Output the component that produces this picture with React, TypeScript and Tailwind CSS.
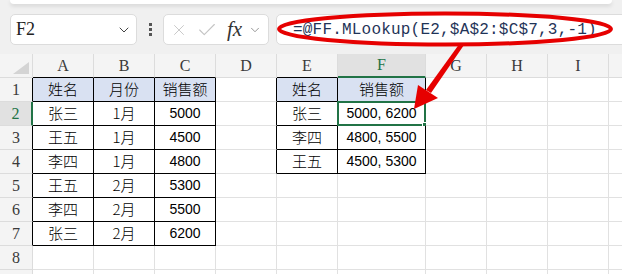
import { X, Check, ChevronDown } from "lucide-react";

const COLS = [
  { label: "", w: "w-[33px]" },
  { label: "A", w: "w-[61px]" },
  { label: "B", w: "w-[61px]" },
  { label: "C", w: "w-[61px]" },
  { label: "D", w: "w-[61px]" },
  { label: "E", w: "w-[61px]" },
  { label: "F", w: "w-[88px]" },
  { label: "G", w: "w-[61px]" },
  { label: "H", w: "w-[61px]" },
  { label: "I", w: "w-[61px]" },
  { label: "", w: "w-[61px]" },
];

// data rows, index = column (1..6)
const DATA: string[][] = [
  ["", "姓名", "月份", "销售额", "", "姓名", "销售额"],
  ["", "张三", "1月", "5000", "", "张三", "5000, 6200"],
  ["", "王五", "1月", "4500", "", "李四", "4800, 5500"],
  ["", "李四", "1月", "4800", "", "王五", "4500, 5300"],
  ["", "王五", "2月", "5300", "", "", ""],
  ["", "李四", "2月", "5500", "", "", ""],
  ["", "张三", "2月", "6200", "", "", ""],
  ["", "", "", "", "", "", ""],
  ["", "", "", "", "", "", ""],
];

function inTable(r: number, c: number) {
  if (r >= 1 && r <= 7 && c >= 1 && c <= 3) return true;
  if (r >= 1 && r <= 4 && (c === 5 || c === 6)) return true;
  return false;
}

const cjk = "font-['Noto_Sans_CJK_SC',sans-serif] font-light";
const num = "font-['Liberation_Sans',sans-serif]";
const serif = "font-['Liberation_Serif',serif]";

function Cell({ r, c }: { r: number; c: number }) {
  const text = DATA[r - 1]?.[c] ?? "";
  const right = inTable(r, c) || inTable(r, c + 1) ? "border-r-black" : "border-r-[#e1e1e1]";
  const bottom = inTable(r, c) || inTable(r + 1, c) ? "border-b-black" : "border-b-[#e1e1e1]";
  const header = r === 1 && inTable(r, c) ? "bg-[#d9e1f2]" : "bg-white";
  const isNum = /^[0-9, ]+$/.test(text);
  return (
    <div
      className={`${COLS[c].w} relative h-[24px] shrink-0 border-r border-b ${right} ${bottom} ${header} flex items-center justify-center ${
        isNum ? `${num} text-[14px]` : `${cjk} text-[15px]`
      } text-black`}
    >
      {text}
      {r === 2 && c === 6 && (
        <div className="absolute -left-[1px] -top-[1px] w-[89px] h-[25px] border-2 border-[#217346]">
          <div className="absolute -right-[4px] -bottom-[4px] w-[6px] h-[6px] bg-[#217346] border border-white" />
        </div>
      )}
    </div>
  );
}

function ColumnHeader() {
  return (
    <div className="flex h-[24px]">
      {COLS.map((col, c) => {
        if (c === 0) {
          return (
            <div key={c} className={`${col.w} shrink-0 h-[24px] relative bg-[#f4f4f4] border-r border-b border-[#dcdcdc]`}>
              <div className="absolute right-[3px] bottom-[3px] w-0 h-0 border-l-[16px] border-l-transparent border-b-[12px] border-b-[#d4d4d4]" />
            </div>
          );
        }
        const sel = col.label === "F";
        const bottom = sel ? "border-b-2 border-b-[#217346]" : inTable(1, c) ? "border-b border-b-black" : "border-b border-b-[#dcdcdc]";
        return (
          <div
            key={c}
            className={`${col.w} shrink-0 h-[24px] flex items-center justify-center border-r border-r-[#dcdcdc] ${bottom} ${
              sel ? "bg-[#e1e1e1] text-[#217346]" : "bg-[#f4f4f4] text-[#3a3a3a]"
            } ${serif} text-[16px]`}
          >
            {col.label}
          </div>
        );
      })}
    </div>
  );
}

function Row({ r }: { r: number }) {
  const sel = r === 2;
  return (
    <div className="flex h-[24px]">
      <div
        className={`w-[33px] shrink-0 h-[24px] flex items-center justify-center border-b border-b-[#dcdcdc] ${
          sel ? "border-r-2 border-r-[#217346] bg-[#e1e1e1] text-[#217346]" : inTable(r, 1) ? "border-r border-r-black bg-[#f4f4f4] text-[#3a3a3a]" : "border-r border-r-[#dcdcdc] bg-[#f4f4f4] text-[#3a3a3a]"
        } ${serif} text-[16px]`}
      >
        {r < 9 ? r : ""}
      </div>
      {COLS.slice(1).map((_, i) => (
        <Cell key={i} r={r} c={i + 1} />
      ))}
    </div>
  );
}

function Toolbar() {
  return (
    <div className="relative h-[54px] bg-[#f0f0f0]">
      <div className="absolute left-[10px] right-[10px] top-0 h-[4px] bg-white rounded-b-[8px] shadow-[0_2px_4px_rgba(0,0,0,0.12)]" />
      <div className="flex items-center pt-[14px] pl-[10px]">
        <div className="w-[127px] h-[31px] shrink-0 bg-white border border-[#dcdcdc] rounded-[5px] flex items-center justify-between pl-[5px] pr-[4px]">
          <span className={`${serif} text-[18px] text-[#222]`}>F2</span>
          <ChevronDown size={16} strokeWidth={1.5} className="text-[#444]" />
        </div>
        <div className="w-[26px] shrink-0 flex flex-col items-center gap-[2px]">
          <div className="w-[3px] h-[3px] bg-[#555]" />
          <div className="w-[3px] h-[3px] bg-[#555]" />
          <div className="w-[3px] h-[3px] bg-[#555]" />
        </div>
        <div className="w-[106px] h-[31px] shrink-0 bg-white border border-[#dcdcdc] rounded-[5px] flex items-center pl-[6px]">
          <X size={18} strokeWidth={1.2} className="text-[#c4c4c4]" />
          <Check size={22} strokeWidth={1.2} className="text-[#c4c4c4] ml-[8px]" />
          <span className={`${serif} italic text-[21px] text-[#333] ml-[9px] leading-none`}>fx</span>
          <ChevronDown size={14} strokeWidth={1.5} className="text-[#888] ml-[6px]" />
        </div>
        <div className="ml-[7px] h-[31px] w-[400px] shrink-0 bg-white border border-[#dcdcdc] rounded-[5px] flex items-center pl-[16px]">
          <span className="font-['Liberation_Mono',monospace] text-[16px] tracking-[0.2px] text-[#1f3458]">
            =@FF.MLookup(E2,$A$2:$C$7,3,-1)
          </span>
        </div>
      </div>
    </div>
  );
}

export default function App() {
  return (
    <div className="relative w-[622px] h-[274px] overflow-hidden bg-[#f0f0f0]">
      <Toolbar />
      <ColumnHeader />
      {[1, 2, 3, 4, 5, 6, 7, 8, 9].map((r) => (
        <Row key={r} r={r} />
      ))}
      <svg className="absolute left-0 top-0 pointer-events-none" width="622" height="274">
        <ellipse cx="445" cy="29" rx="166" ry="15.5" fill="none" stroke="#e60000" strokeWidth="4" />
        <polygon points="460,43 464,45 431,93 426,90" fill="#e60000" />
        <polygon points="414,109 418,85 438,98" fill="#e60000" />
      </svg>
    </div>
  );
}
